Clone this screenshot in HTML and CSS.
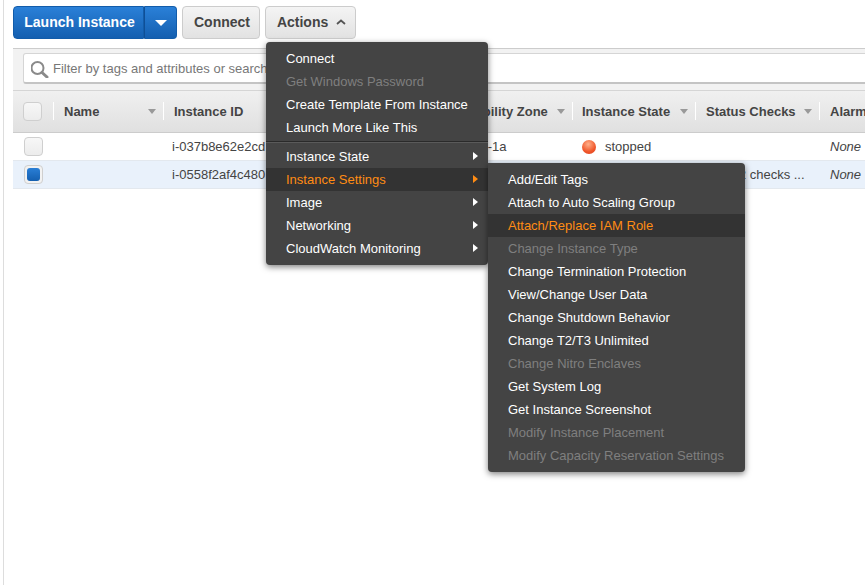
FILE: index.html
```html
<!DOCTYPE html>
<html>

<head>
    <meta charset="UTF-8">
    <title>Instances</title>
    <link rel="stylesheet" href="styles.css">
</head>

<body>

    <div class="page">
        <div class="toolbar">
            <div class="launch-group">
                <button class="btn-launch"><span class="btn-label">Launch Instance</span></button>
                <button class="btn-launch-caret"><span class="caret-down"></span></button>
            </div>
            <button class="btn"><span class="btn-label">Connect</span></button>
            <button class="btn btn-actions"><span class="btn-label">Actions</span>
                <svg class="chevron" width="10" height="6" viewBox="0 0 10 6">
                    <path d="M1 5 L5 1.5 L9 5" fill="none" stroke="#555" stroke-width="1.8"></path>
                </svg>
            </button>
        </div>

        <div class="filter-bar">
            <div class="filter-input">
                <svg class="search-icon" width="20" height="20" viewBox="0 0 20 20">
                    <circle cx="6.5" cy="10" r="6" fill="none" stroke="#8a8a8a" stroke-width="2"></circle>
                    <path d="M11 14.5 L16 19" stroke="#8a8a8a" stroke-width="3" stroke-linecap="round"></path>
                </svg>
                <span>Filter by tags and attributes or search</span>
            </div>
        </div>

        <div class="table">
            <div class="row head">
                <div class="cell col-check"><span class="check head-check"></span></div>
                <div class="cell col-name">Name<span class="sort"></span></div>
                <div class="cell col-id">Instance ID</div>
                <div class="cell col-zone">Availability Zone<span class="sort"></span></div>
                <div class="cell col-state">Instance State<span class="sort"></span></div>
                <div class="cell col-status">Status Checks<span class="sort"></span></div>
                <div class="cell col-alarm">Alarm Status</div>
            </div>
            <div class="row">
                <div class="cell col-check"><span class="check"></span></div>
                <div class="cell col-name"></div>
                <div class="cell col-id">i-037b8e62e2cd</div>
                <div class="cell col-zone">us-east-1a</div>
                <div class="cell col-state"><span class="dot"></span><span class="state-text">stopped</span></div>
                <div class="cell col-status"></div>
                <div class="cell col-alarm"><em>None</em></div>
            </div>
            <div class="row selected">
                <div class="cell col-check"><span class="check checked"></span></div>
                <div class="cell col-name"></div>
                <div class="cell col-id">i-0558f2af4c480</div>
                <div class="cell col-zone"></div>
                <div class="cell col-state"></div>
                <div class="cell col-status"><span class="status-text">2/2 checks ...</span></div>
                <div class="cell col-alarm"><em>None</em></div>
            </div>
        </div>
    </div>

    <div class="menu menu-main">
        <div class="item">Connect</div>
        <div class="item disabled">Get Windows Password</div>
        <div class="item">Create Template From Instance</div>
        <div class="item">Launch More Like This</div>
        <div class="menu-sep"></div>
        <div class="item sub">Instance State</div>
        <div class="item sub active">Instance Settings</div>
        <div class="item sub">Image</div>
        <div class="item sub">Networking</div>
        <div class="item sub">CloudWatch Monitoring</div>
    </div>

    <div class="menu menu-settings">
        <div class="item">Add/Edit Tags</div>
        <div class="item">Attach to Auto Scaling Group</div>
        <div class="item active">Attach/Replace IAM Role</div>
        <div class="item disabled">Change Instance Type</div>
        <div class="item">Change Termination Protection</div>
        <div class="item">View/Change User Data</div>
        <div class="item">Change Shutdown Behavior</div>
        <div class="item">Change T2/T3 Unlimited</div>
        <div class="item disabled">Change Nitro Enclaves</div>
        <div class="item">Get System Log</div>
        <div class="item">Get Instance Screenshot</div>
        <div class="item disabled">Modify Instance Placement</div>
        <div class="item disabled">Modify Capacity Reservation Settings</div>
    </div>

</body>

</html>
```

FILE: styles.css
```css
html,
body {
    margin: 0;
    padding: 0;
    height: 100%;
    overflow: hidden;
    background: #ffffff;
    font-family: "Liberation Sans", Arial, sans-serif;
    font-size: 13px;
    color: #444444;
}

.page {
    box-sizing: border-box;
    height: 100%;
    margin-left: 3px;
    padding: 6px 0 0 9px;
    border-left: 1px solid #dddddd;
    overflow: hidden;
}

/* toolbar */

.toolbar {
    display: flex;
    gap: 5px;
    height: 33px;
}

button {
    font-family: inherit;
    font-size: 14px;
    font-weight: bold;
    cursor: pointer;
}

.btn-label {
    position: relative;
    top: -1px;
}

.launch-group {
    display: flex;
}

.btn-launch,
.btn-launch-caret {
    height: 33px;
    border: 1px solid #125caa;
    background: linear-gradient(to bottom, #2a80d8, #145fb0);
    color: #ffffff;
    padding: 0;
}

.btn-launch {
    width: 131px;
    padding-left: 2px;
    border-radius: 4px 0 0 4px;
}

.btn-launch-caret {
    width: 33px;
    border-left: 1px solid #0f4f96;
    border-radius: 0 4px 4px 0;
}

.caret-down {
    display: block;
    width: 0;
    margin: 1px auto 0;
    border-top: 6px solid #ffffff;
    border-left: 6px solid transparent;
    border-right: 6px solid transparent;
}

.btn {
    height: 33px;
    border: 1px solid #cccccc;
    border-radius: 4px;
    background: linear-gradient(to bottom, #f4f4f4, #e2e2e2);
    color: #444444;
    padding: 0 0 0 2px;
    width: 78px;
}

.btn-actions {
    width: 91px;
}

.chevron {
    margin-left: 4px;
    vertical-align: 3px;
}

/* filter */

.filter-bar {
    box-sizing: border-box;
    height: 42px;
    margin-top: 9px;
    padding: 4px 0 6px 10px;
    background: #f2f2f2;
    border-top: 1px solid #cccccc;
}

.filter-input {
    box-sizing: border-box;
    display: flex;
    align-items: center;
    gap: 2px;
    height: 31px;
    width: 1000px;
    padding-left: 7px;
    background: #ffffff;
    border: 1px solid #d5d5d5;
    border-bottom: 2px solid #c4c4c4;
    border-radius: 3px 0 0 3px;
    color: #777777;
    white-space: nowrap;
}

/* table */

.table {
    width: 1000px;
}

.row {
    display: flex;
    height: 28px;
    align-items: center;
    border-bottom: 1px solid #e3e8ee;
    box-sizing: border-box;
    color: #444444;
}

.row.head {
    height: 43px;
    padding-bottom: 1px;
    background: linear-gradient(to bottom, #f0f0f0, #e0e0e0);
    border-top: 1px solid #d5d5d5;
    border-bottom: 1px solid #cccccc;
    font-weight: bold;
    color: #444444;
}

.row.selected {
    background: #e9f1fb;
}

.cell {
    box-sizing: border-box;
    display: flex;
    align-items: center;
    padding-left: 11px;
    white-space: nowrap;
    overflow: hidden;
    position: relative;
    height: 100%;
}

.head .cell::before {
    content: "";
    position: absolute;
    left: 0;
    top: 11px;
    height: 18px;
    border-left: 1px solid #ffffff;
}

.head .col-check::before {
    display: none;
}

.sort {
    position: absolute;
    right: 7px;
    top: 18px;
    border-top: 5px solid #999999;
    border-left: 4px solid transparent;
    border-right: 4px solid transparent;
}

.col-check { width: 40px; }
.col-name { width: 110px; }
.col-id { width: 271px; }
.col-zone { width: 138px; }
.col-state { width: 123px; padding-left: 10px; }
.col-status { width: 124px; }
.col-alarm { width: 120px; }

.row:not(.head) .col-id {
    padding-left: 9px;
}

.check {
    box-sizing: border-box;
    display: block;
    width: 19px;
    height: 19px;
    border: 1px solid #cfcfcf;
    border-radius: 4px;
    background: linear-gradient(to bottom, #f7f7f7, #ececec);
}

.check.head-check {
    margin-left: -1px;
}

.check.checked {
    padding: 2px;
    background: #f2f2f2;
}

.check.checked::after {
    content: "";
    display: block;
    height: 100%;
    border-radius: 3px;
    background: linear-gradient(to bottom, #2a7fd6, #145fb0);
}

.dot {
    width: 14px;
    height: 14px;
    border-radius: 50%;
    background: radial-gradient(circle at 45% 30%, #ffb08a, #f0562a 60%, #d9401c);
}

.state-text {
    margin-left: 9px;
}

.status-text {
    margin-left: 22px;
}

em {
    font-style: italic;
}

/* menus */

.menu {
    position: absolute;
    box-sizing: border-box;
    padding: 5px 0;
    background: #444444;
    border-radius: 4px;
    box-shadow: 0 2px 6px rgba(0, 0, 0, 0.5);
    color: #ffffff;
}

.menu-main {
    left: 266px;
    top: 42px;
    width: 222px;
    height: 223px;
}

.menu-settings {
    left: 488px;
    top: 163px;
    width: 257px;
    height: 309px;
    border-radius: 0 4px 4px 4px;
}

.item {
    position: relative;
    height: 23px;
    line-height: 23px;
    padding-left: 20px;
    white-space: nowrap;
}

.item.disabled {
    color: #7f7f7f;
}

.item.active {
    background: #333333;
    color: #ff8c14;
}

.menu-sep {
    height: 2px;
    margin: 2px 0;
    background: #2a2a2a;
    border-bottom: 1px solid #5a5a5a;
    box-sizing: border-box;
}

.item.sub::after {
    content: "";
    position: absolute;
    right: 10px;
    top: 7px;
    border-left: 5px solid #ffffff;
    border-top: 4.5px solid transparent;
    border-bottom: 4.5px solid transparent;
}

.item.sub.active::after {
    border-left-color: #ff8c14;
}
```
